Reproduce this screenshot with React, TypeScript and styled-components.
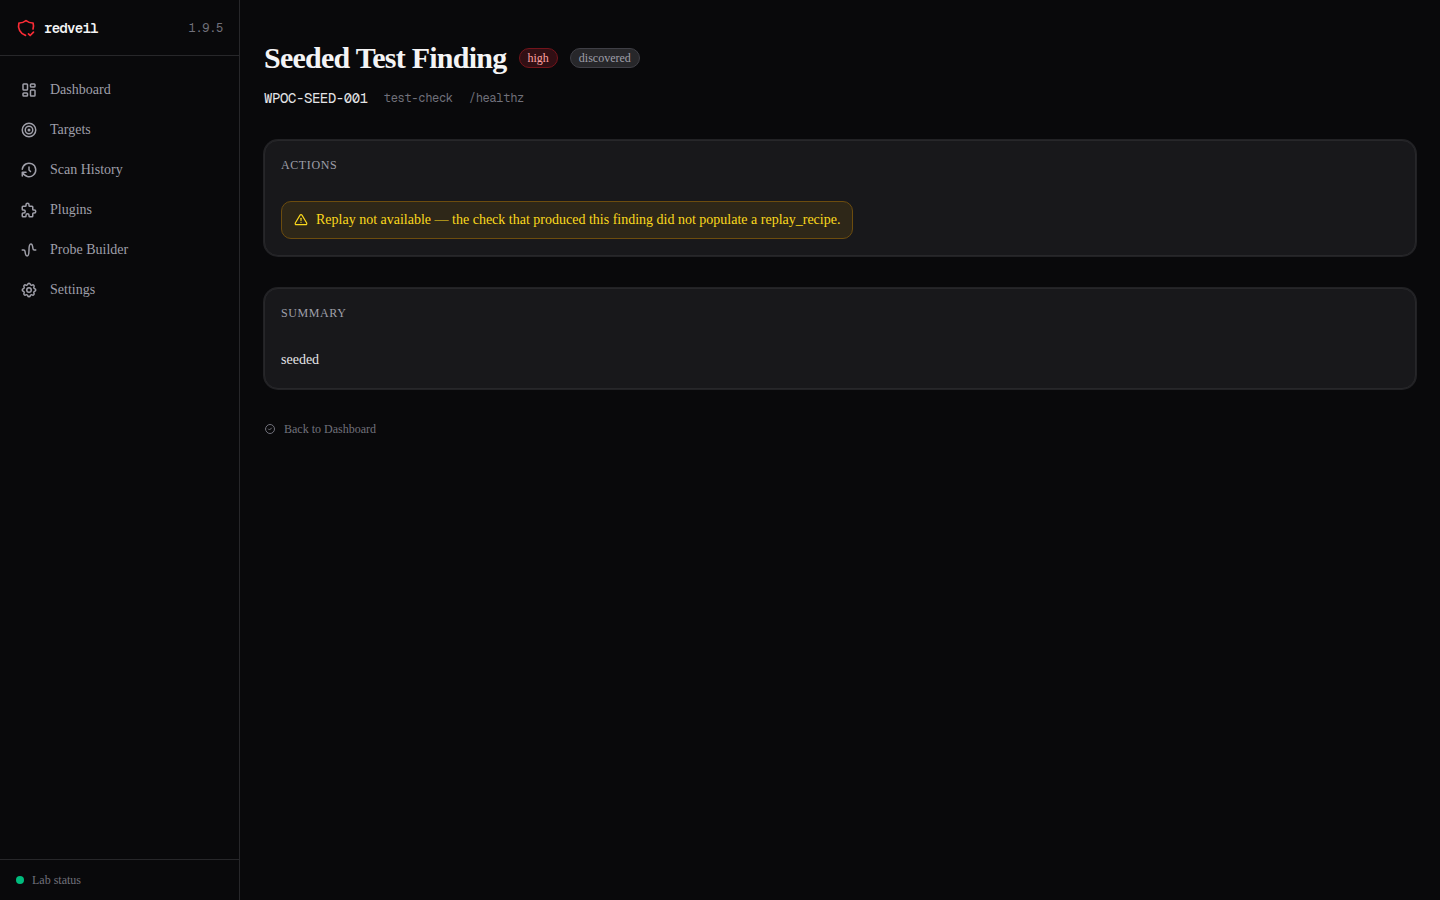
import React from "react";
import styled, { createGlobalStyle } from "styled-components";
import { TbLayoutDashboard, TbTarget, TbHistory, TbPuzzle, TbWaveSine, TbSettings, TbShieldCheck, TbAlertTriangle, TbCircleCheck } from "react-icons/tb";

const serif = '"Liberation Serif", "Times New Roman", serif';
const mono = '"Geist Mono", "Liberation Mono", monospace';

const Global = createGlobalStyle`
  *, *::before, *::after { box-sizing: border-box; }
  body { margin: 0; background: #09090b; color: #f4f4f5; font-family: ${serif}; }
  h1, h2, p { margin: 0; font-weight: 400; }
`;

const Shell = styled.div`display: flex; min-height: 100vh;`;
const Sidebar = styled.aside`
  display: flex; flex-direction: column; flex: none; width: 240px;
  border-right: 1px solid #27272a;
`;
const Brand = styled.div`
  display: flex; align-items: center; gap: 8px; height: 56px; padding: 0 16px;
  border-bottom: 1px solid #27272a;
  svg { color: #fb2c36; }
`;
const BrandName = styled.span`
  font: 600 14px/20px ${mono}; letter-spacing: -0.05em;
`;
const Version = styled.span`
  margin-left: auto; font: 12px/16px ${mono}; letter-spacing: -0.025em; color: #71717b;
`;
const Nav = styled.nav`
  display: flex; flex-direction: column; flex: 1; gap: 4px; padding: 16px 8px;
`;
const NavLink = styled.a`
  display: flex; align-items: center; gap: 12px; padding: 8px 12px;
  font-size: 14px; line-height: 20px; color: #9f9fa9; text-decoration: none;
`;
const Status = styled.footer`
  display: flex; align-items: center; gap: 8px; padding: 12px 16px;
  border-top: 1px solid #27272a; font-size: 12px; line-height: 16px; color: #71717b;
`;
const Dot = styled.span`width: 8px; height: 8px; border-radius: 50%; background: #00bc7d;`;

const Main = styled.main`
  display: flex; flex-direction: column; flex: 1; gap: 32px; min-width: 0; padding: 40px 24px;
`;
const Heading = styled.header`display: flex; flex-direction: column; gap: 12px;`;
const TitleRow = styled.div`display: flex; align-items: center; flex-wrap: wrap; gap: 12px;`;
const Title = styled.h1`
  && { font-size: 30px; line-height: 36px; font-weight: 700; letter-spacing: -0.025em; }
`;
const Badge = styled.span<{ $danger?: boolean }>`
  padding: 1px 8px; border-radius: 10px; font-size: 12px; line-height: 16px;
  border: 1px solid ${(p) => (p.$danger ? "#74141b" : "#3f3f46")};
  background: ${(p) => (p.$danger ? "#310f14" : "#27272a")};
  color: ${(p) => (p.$danger ? "#ffa2a2" : "#9f9fa9")};
`;
const Meta = styled.div`
  display: flex; align-items: center; gap: 16px;
  font: 12px/20px ${mono}; letter-spacing: -0.025em; color: #71717b;
`;
const FindingId = styled.span`font-size: 14px; letter-spacing: -0.03em; color: #e4e4e7;`;
const Card = styled.section`
  display: flex; flex-direction: column; align-items: flex-start; gap: 28px;
  padding: 16px; border: 1px solid #27272a; border-radius: 14px;
  background: #18181b; box-shadow: 0 0 0 1px #222225;
`;
const CardTitle = styled.h2`
  font-size: 12px; line-height: 16px; letter-spacing: 0.05em; text-transform: uppercase; color: #9f9fa9;
`;
const Notice = styled.p`
  display: flex; align-items: center; gap: 8px; padding: 8px 12px;
  border: 1px solid #6c4c0e; border-radius: 10px; background: #2e2718;
  font-size: 14px; line-height: 20px; color: #fcd91d;
`;
const Summary = styled.p`font-size: 14px; line-height: 1.625; color: #e4e4e7;`;
const BackLink = styled.a`
  display: inline-flex; align-self: flex-start; align-items: center; gap: 8px;
  font-size: 12px; line-height: 16px; color: #71717b; text-decoration: none;
`;

const items = [
  { label: "Dashboard", Icon: TbLayoutDashboard },
  { label: "Targets", Icon: TbTarget },
  { label: "Scan History", Icon: TbHistory },
  { label: "Plugins", Icon: TbPuzzle },
  { label: "Probe Builder", Icon: TbWaveSine },
  { label: "Settings", Icon: TbSettings },
];

export default function App() {
  return (
    <>
      <Global />
      <Shell>
        <Sidebar>
          <Brand>
            <TbShieldCheck size={20} />
            <BrandName>redveil</BrandName>
            <Version>1.9.5</Version>
          </Brand>
          <Nav>
            {items.map(({ label, Icon }) => (
              <NavLink href="#" key={label}><Icon size={18} />{label}</NavLink>
            ))}
          </Nav>
          <Status><Dot />Lab status</Status>
        </Sidebar>
        <Main>
          <Heading>
            <TitleRow>
              <Title>Seeded Test Finding</Title>
              <Badge $danger>high</Badge>
              <Badge>discovered</Badge>
            </TitleRow>
            <Meta>
              <FindingId>WPOC-SEED-001</FindingId>
              <span>test-check</span>
              <span>/healthz</span>
            </Meta>
          </Heading>
          <Card>
            <CardTitle>Actions</CardTitle>
            <Notice><TbAlertTriangle size={14} />Replay not available — the check that produced this finding did not populate a replay_recipe.</Notice>
          </Card>
          <Card>
            <CardTitle>Summary</CardTitle>
            <Summary>seeded</Summary>
          </Card>
          <BackLink href="#"><TbCircleCheck size={12} />Back to Dashboard</BackLink>
        </Main>
      </Shell>
    </>
  );
}
